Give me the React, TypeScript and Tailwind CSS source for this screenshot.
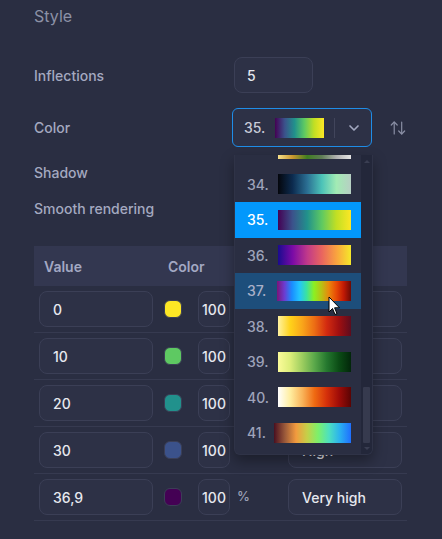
import { ArrowUpDown, ChevronDown } from "lucide-react";

type Palette = { n: string; g: string; numW: string; state?: "selected" | "hover" };

const palettes: Palette[] = [
  { n: "33.", numW: "w-[31px]", g: "bg-[linear-gradient(90deg,#f7e08a,#c9962e,#3f7d20,#5f7d55,#b0b0b0,#e6e6e6)]" },
  { n: "34.", numW: "w-[31px]", g: "bg-[linear-gradient(90deg,#04060c,#0c2b4f,#2b6f93,#4cc3b8,#a2ebb4,#b7cfc3)]" },
  { n: "35.", numW: "w-[31px]", g: "bg-[linear-gradient(90deg,#440154,#3b528b,#21918c,#5ec962,#c2df23,#fde725)]", state: "selected" },
  { n: "36.", numW: "w-[31px]", g: "bg-[linear-gradient(90deg,#1a0b8f,#7a0aa6,#c0398a,#e9655f,#f9a33f,#f5e82a)]" },
  {
    n: "37.",
    numW: "w-[30px]",
    g: "bg-[linear-gradient(90deg,#7a1478,#6d3bd0,#1a8cff,#22c3ff,#3be2a0,#8cf021,#b8c214,#e9870c,#e84a06,#c11a05,#6b0a05)]",
    state: "hover",
  },
  { n: "38.", numW: "w-[31px]", g: "bg-[linear-gradient(90deg,#fff2a0,#ffd21a,#f9a51a,#ec6d14,#d32b10,#a00f10,#5d0c1e)]" },
  { n: "39.", numW: "w-[31px]", g: "bg-[linear-gradient(90deg,#fbfb9a,#dcee7a,#9ccd5f,#5aa84a,#25782f,#0b4c15,#02260a)]" },
  { n: "40.", numW: "w-[31px]", g: "bg-[linear-gradient(90deg,#ffffff,#ffeea0,#f9b45a,#ef6a12,#d5300a,#a00c08,#5a0404)]" },
  { n: "41.", numW: "w-[27px]", g: "bg-[linear-gradient(90deg,#4a1020,#9b5a3a,#f29a3e,#c6cf48,#7df06a,#4de0c0,#2ab0f0,#1f6fff)]" },
];

const rows = [
  { value: "0", swatch: "bg-[#fde725]", label: "Very low" },
  { value: "10", swatch: "bg-[#5ec962]", label: "Low" },
  { value: "20", swatch: "bg-[#21918c]", label: "Medium" },
  { value: "30", swatch: "bg-[#3b528b]", label: "High" },
  { value: "36,9", swatch: "bg-[#440154]", label: "Very high" },
];

const input = "h-[36px] rounded-[8px] border border-[#3b3f56] bg-[#2d3146] text-[14px] text-[#e6e8ef] flex items-center";

export default function App() {
  return (
    <div className="relative w-[442px] h-[539px] overflow-hidden bg-[#2a2e42] font-['Inter',sans-serif] font-medium">
      <div className="pl-[34px] pr-[35px]">
        <div className="h-[36px] pt-[4px] text-[16px] font-normal text-[#8c91a6]">Style</div>

        <div className="mt-[21px] flex items-center h-[36px]">
          <div className="w-[200px] text-[14px] text-[#a4a9c0]">Inflections</div>
          <div className={`${input} w-[79px] pl-[12px]`}>5</div>
        </div>

        <div className="mt-[15px] flex items-center h-[39px]">
          <div className="w-[199px] text-[14px] text-[#a4a9c0]">Color</div>
          <div className="w-[141px] h-[39px] rounded-[6px] border border-[#1f8de8] bg-[#2d3146] flex items-center">
            <span className="pl-[11px] w-[42px] text-[14px] text-[#c8cbd8]">35.</span>
            <span className="w-[49px] h-[20px] bg-[linear-gradient(90deg,#440154,#3b528b,#21918c,#5ec962,#c2df23,#fde725)]" />
            <span className="ml-[10px] w-px h-[20px] bg-[#41455b]" />
            <ChevronDown className="ml-[11px] text-[#a3a8c0]" size={16} strokeWidth={2.5} />
          </div>
          <ArrowUpDown className="ml-[17px] text-[#8a8fa5]" size={18} strokeWidth={1.6} />
        </div>

        <div className="h-[50px] flex items-center text-[14px] text-[#a4a9c0]">Shadow</div>
        <div className="h-[22px] flex items-center text-[14px] text-[#a4a9c0]">Smooth rendering</div>

        <div className="mt-[27px]">
          <div className="h-[40px] bg-[#333750] flex items-center text-[14px] font-semibold text-[#a3a8c3]">
            <span className="pl-[10px] w-[134px]">Value</span>
            <span className="w-[130px]">Color</span>
            <span>Label</span>
          </div>
          {rows.map((r) => (
            <div key={r.value} className="flex items-center pl-[5px] pr-[5px] pt-[5px] pb-[5px] border-b border-[#363a50]">
              <div className={`${input} w-[114px] pl-[13px]`}>{r.value}</div>
              <span className={`ml-[11px] w-[18px] h-[18px] rounded-[6px] border border-[#3b3f56] ${r.swatch}`} />
              <div className={`${input} ml-[16px] w-[32px] justify-center`}>100</div>
              <span className="ml-[7px] text-[13px] text-[#9ba0b6]">%</span>
              <div className={`${input} ml-auto w-[114px] pl-[13px]`}>{r.label}</div>
            </div>
          ))}
        </div>
      </div>

      <div className="absolute left-[234px] top-[155px] w-[139px] h-[300px] flex rounded-b-[6px] overflow-hidden bg-[#2a2e42] border-x border-b border-[#2f3347] shadow-[0_6px_14px_rgba(0,0,0,0.35)]">
        <div className="w-[128px] overflow-hidden">
          <div className="mt-[-24px]">
            {palettes.map((p) => (
              <div
                key={p.n}
                className={`h-[35.5px] flex items-center pl-[12px] text-[14px] ${
                  p.state === "selected"
                    ? "bg-[#0398fc] text-white"
                    : p.state === "hover"
                      ? "bg-[#1d4e7b] text-[#a9b0c8]"
                      : "text-[#9ea3ba]"
                }`}
              >
                <span className={p.numW}>{p.n}</span>
                <span className={`h-[20px] w-[73px] ${p.g} ${p.n === "37." ? "w-[74px]" : ""} ${p.n === "41." ? "w-[77px]" : ""}`} />
              </div>
            ))}
          </div>
        </div>
        <div className="w-[11px] bg-[#23273a] relative">
          <span className="absolute left-[3px] top-[5px] w-0 h-0 border-x-[3px] border-x-transparent border-b-[3px] border-b-[#3a3e52]" />
          <span className="absolute left-[2px] top-[232px] w-[7px] h-[56px] bg-[#363a4e] rounded-[1px]" />
          <span className="absolute left-[3px] top-[292px] w-0 h-0 border-x-[3px] border-x-transparent border-t-[3px] border-t-[#3a3e52]" />
        </div>
      </div>

      <svg className="absolute left-[328px] top-[296px]" width="14" height="21" viewBox="0 0 14 21">
        <path d="M1 1 L1 16 L4.5 12.5 L7 18.5 L9 17.6 L6.6 11.8 L11.5 11.8 Z" fill="#fff" stroke="#000" strokeWidth="1" strokeLinejoin="round" />
      </svg>
    </div>
  );
}
